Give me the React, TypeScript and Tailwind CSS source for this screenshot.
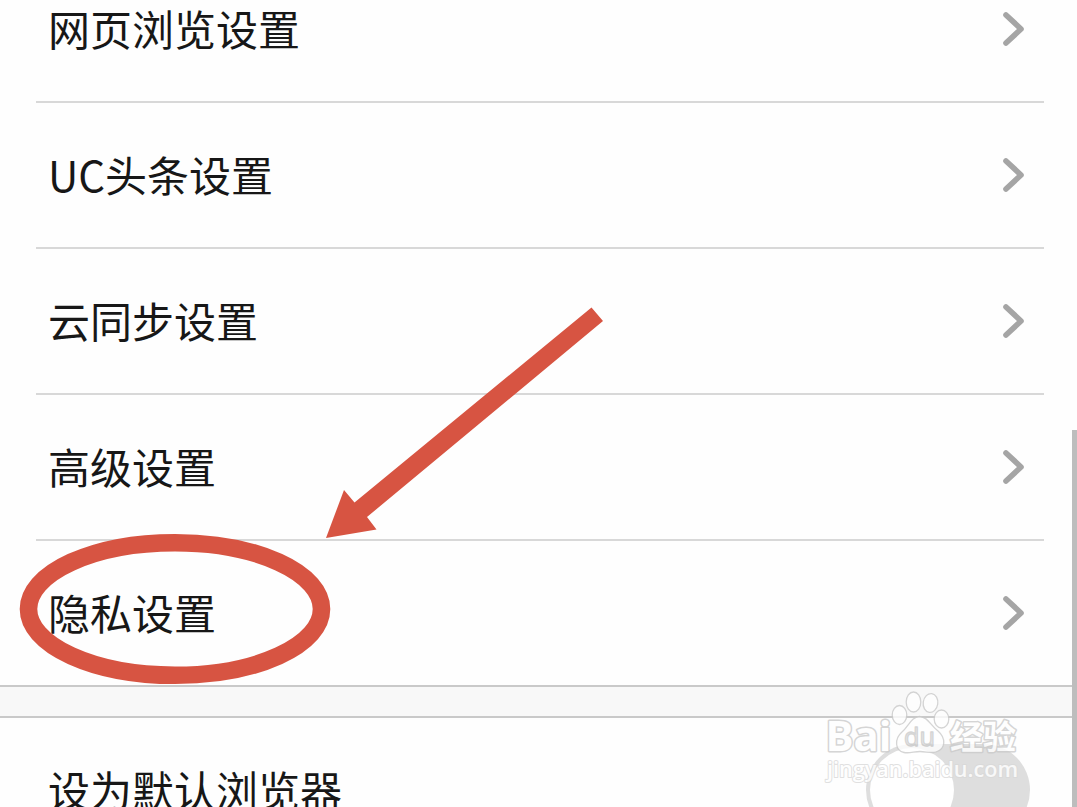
type RowProps = {
  label: string;
  last?: boolean;
};

const rows = ["网页浏览设置", "UC头条设置", "云同步设置", "高级设置", "隐私设置"];

function Chevron() {
  return (
    <svg width="24" height="34" viewBox="0 0 24 34" fill="none" aria-hidden="true">
      <path d="M3 3 L18 17 L3 31" stroke="#a5a5a5" strokeWidth="5.6" strokeLinecap="round" strokeLinejoin="round" />
    </svg>
  );
}

function SettingsRow({ label, last = false }: RowProps) {
  return (
    <li
      className={
        last
          ? "flex h-[144px] shrink-0 items-center justify-between pr-[17px] pl-3"
          : "flex h-[146px] shrink-0 items-center justify-between border-b-2 border-[#d8d8d8] pr-[17px] pl-3"
      }
    >
      <span className="pb-0.5 text-[42px] leading-[60px] [font-kerning:none]">{label}</span>
      <Chevron />
    </li>
  );
}

function Toggle() {
  return (
    <button
      type="button"
      role="switch"
      aria-checked="false"
      aria-label="设为默认浏览器"
      className="flex h-[92px] w-[164px] items-center rounded-full bg-[#dedede] pl-1"
    >
      <span className="size-[84px] rounded-full bg-white" />
    </button>
  );
}

function Annotation() {
  return (
    <svg
      className="pointer-events-none absolute top-0 left-0"
      width="1077"
      height="807"
      viewBox="0 0 1077 807"
      aria-hidden="true"
    >
      <ellipse cx="175" cy="609" rx="146.5" ry="66.3" fill="none" stroke="#d75442" strokeWidth="17.6" />
      <path d="M591.5 307.5 L603 321 L367 517 L376.500 529.500 L326 538 L344 490 L354.500 502.500 Z" fill="#d75442" />
    </svg>
  );
}

function Watermark() {
  return (
    <svg
      className="pointer-events-none absolute top-[685px] left-[820px] opacity-80"
      width="210"
      height="105"
      viewBox="820 685 210 105"
      aria-hidden="true"
    >
      <g fill="#ffffff" stroke="#cbcbcb" strokeWidth="1.3" strokeLinejoin="round">
        <g paintOrder="stroke" fontWeight="700" strokeWidth="3">
          <text
            x="825.500"
            y="751"
            fontFamily="'Open Sans', sans-serif"
            fontSize="42"
            textLength="66"
            lengthAdjust="spacingAndGlyphs"
          >
            Bai
          </text>
          <text
            x="950"
            y="749"
            fontFamily="'Noto Sans CJK SC', sans-serif"
            fontSize="33"
            textLength="66"
            lengthAdjust="spacingAndGlyphs"
          >
            经验
          </text>
        </g>
        <ellipse cx="899.500" cy="715" rx="7.300" ry="9.500" />
        <ellipse cx="913.500" cy="702" rx="7.300" ry="10" />
        <ellipse cx="930.500" cy="703" rx="7.300" ry="9.500" transform="rotate(8 930.500 703)" />
        <ellipse cx="941.500" cy="719" rx="7.300" ry="9" />
        <path d="M919.500 716.500 C911 717 909 726 902 732 C894 739 895 751 904 752.500 C910 753.500 914 751.500 920 751.500 C926 751.500 931 753.500 936 752 C946 749 946 738 938 731 C930 725 928 717 919.500 716.500 Z" />
        <text
          x="904"
          y="746"
          fontFamily="'Open Sans', sans-serif"
          fontSize="25"
          textLength="31"
          lengthAdjust="spacingAndGlyphs"
          fill="#e3e3e3"
        >
          du
        </text>
        <text
          x="827"
          y="777"
          fontFamily="'Open Sans', sans-serif"
          fontSize="22"
          textLength="191"
          lengthAdjust="spacingAndGlyphs"
          paintOrder="stroke"
          strokeWidth="2"
          stroke="#d9d9d9"
          fontWeight="600"
        >
          jingyan.baidu.com
        </text>
      </g>
    </svg>
  );
}

export default function App() {
  return (
    <main className="relative h-[807px] w-[1077px] overflow-hidden bg-[#fefefe] font-['Noto_Sans_CJK_SC',sans-serif] text-[#171717]">
      <ul className="-mt-[43px] pr-[33px] pl-9">
        {rows.map((label, i) => (
          <SettingsRow key={label} label={label} last={i === rows.length - 1} />
        ))}
      </ul>

      <div className="h-[33px] border-y-2 border-[#c9c9c9] bg-[#f8f8f8]" />

      <section className="flex h-[144px] items-center justify-between pr-[47px] pl-12">
        <span className="pb-0.5 text-[42px] leading-[60px]">设为默认浏览器</span>
        <Toggle />
      </section>

      <Annotation />
      <Watermark />
      <div className="absolute top-[430px] right-0 h-[377px] w-[5px] bg-[#bdbdbd]" />
    </main>
  );
}
